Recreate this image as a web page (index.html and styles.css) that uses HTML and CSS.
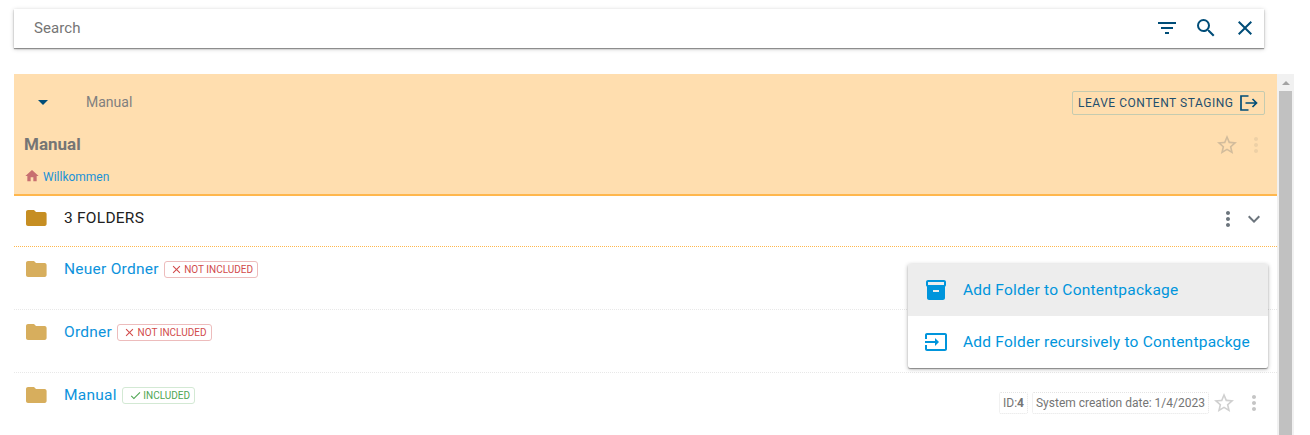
FILE: index.html
```html
<!DOCTYPE html>
<html lang="en">
<head>
<meta charset="utf-8">
<title>Manual</title>
<link rel="stylesheet" href="styles.css">
</head>
<body>
<svg class="defs" width="0" height="0">
  <symbol id="folder" viewBox="0 0 24 24"><path d="M10 4H4c-1.100 0-2 .9-2 2v12c0 1.100.9 2 2 2h16.600c1.100 0 2-.9 2-2V8c0-1.100-.9-2-2-2h-8.600l-2-2z"/></symbol>
  <symbol id="dots" viewBox="0 0 24 24"><path d="M12 8c1.100 0 2-.9 2-2s-.9-2-2-2-2 .9-2 2 .9 2 2 2zm0 2c-1.100 0-2 .9-2 2s.9 2 2 2 2-.9 2-2-.9-2-2-2zm0 6c-1.100 0-2 .9-2 2s.9 2 2 2 2-.9 2-2-.9-2-2-2z"/></symbol>
  <symbol id="star" viewBox="0 0 24 24"><path d="M22 9.240l-7.190-.62L12 2 9.190 8.630 2 9.240l5.460 4.730L5.820 21 12 17.270 18.180 21l-1.630-7.030L22 9.240zM12 15.400l-3.760 2.270 1-4.280-3.320-2.880 4.380-.38L12 6.100l1.710 4.040 4.380.38-3.320 2.880 1 4.280L12 15.400z"/></symbol>
  <symbol id="close" viewBox="0 0 24 24"><path d="M19 6.410L17.590 5 12 10.590 6.410 5 5 6.410 10.590 12 5 17.590 6.410 19 12 13.410 17.590 19 19 17.590 13.410 12z"/></symbol>
  <symbol id="check" viewBox="0 0 24 24"><path d="M9 16.170L4.830 12l-1.420 1.410L9 19 21 7l-1.410-1.410z"/></symbol>
</svg>

<div class="search">
  <span class="search-label">Search</span>
  <svg class="icon" viewBox="0 0 24 24"><path d="M10 18h4v-2h-4v2zM3 6v2h18V6H3zm3 7h12v-2H6v2z"/></svg>
  <svg class="icon" viewBox="0 0 24 24"><path d="M15.500 14h-.79l-.28-.27A6.471 6.471 0 0 0 16 9.500 6.500 6.500 0 1 0 9.500 16c1.610 0 3.090-.59 4.230-1.570l.27.28v.79l5 4.990L20.490 19l-4.990-5zm-6 0C7.010 14 5 11.990 5 9.500S7.010 5 9.500 5 14 7.010 14 9.500 11.990 14 9.500 14z"/></svg>
  <svg class="icon" viewBox="0 0 24 24"><use href="#close"/></svg>
</div>

<div class="frame">
  <main class="panel">
    <header class="head">
      <div class="toolbar">
        <svg class="icon caret" viewBox="0 0 24 24"><path d="M7 10l5 5 5-5z"/></svg>
        <span class="tab">Manual</span>
        <button class="leave">LEAVE CONTENT STAGING
          <svg class="leave-icon" viewBox="0 0 18 16"><path d="M8.500 1H1v14h7.500M5.500 8H16.500M12.500 4l4 4-4 4"/></svg>
        </button>
      </div>
      <div class="title-row">
        <h1 class="title">Manual</h1>
        <svg class="icon faint-star"><use href="#star"/></svg>
        <svg class="icon faint-dots"><use href="#dots"/></svg>
      </div>
      <div class="crumbs">
        <svg class="home" viewBox="0 0 24 24"><path d="M10 20v-6h4v6h5v-8h3L12 3 2 12h3v8z"/></svg>
        <a class="crumb">Willkommen</a>
      </div>
    </header>

    <div class="group">
      <svg class="icon group-folder"><use href="#folder"/></svg>
      <span class="group-name">3 FOLDERS</span>
      <svg class="icon grey"><use href="#dots"/></svg>
      <svg class="icon grey chevron" viewBox="0 0 24 24"><path d="M16.590 8.590L12 13.170 7.410 8.590 6 10l6 6 6-6z"/></svg>
    </div>

    <div class="row">
      <svg class="icon folder"><use href="#folder"/></svg>
      <a class="name">Neuer Ordner</a>
      <span class="badge no"><svg class="mark"><use href="#close"/></svg>NOT INCLUDED</span>
    </div>
    <div class="row">
      <svg class="icon folder"><use href="#folder"/></svg>
      <a class="name">Ordner</a>
      <span class="badge no wide"><svg class="mark"><use href="#close"/></svg>NOT INCLUDED</span>
    </div>
    <div class="row last">
      <svg class="icon folder"><use href="#folder"/></svg>
      <a class="name">Manual</a>
      <span class="badge yes"><svg class="mark"><use href="#check"/></svg>INCLUDED</span>
      <div class="meta">
        <span class="chip">ID:<b>4</b></span>
        <span class="chip date">System creation date: 1/4/2023</span>
        <svg class="icon meta-star"><use href="#star"/></svg>
        <svg class="icon meta-dots"><use href="#dots"/></svg>
      </div>
    </div>

    <div class="menu">
      <div class="item active">
        <svg class="icon" viewBox="0 0 24 24"><path d="M20 2H4c-1 0-2 .9-2 2v3.010c0 .72.43 1.340 1 1.690V20c0 1.100 1.100 2 2 2h14c.9 0 2-.9 2-2V8.700c.57-.35 1-.97 1-1.690V4c0-1.100-1-2-2-2zm-5 12H9v-2h6v2zm5-7H4V4h16v3z"/></svg>
        <span>Add Folder to Contentpackage</span>
      </div>
      <div class="item">
        <svg class="icon" viewBox="0 0 24 24"><path d="M21 3.010H3c-1.100 0-2 .9-2 2V9h2V4.990h18v14.030H3V15H1v4.010c0 1.100.9 1.980 2 1.980h18c1.100 0 2-.88 2-1.980v-14c0-1.110-.9-2-2-2zM11 16l4-4-4-4v3H1v2h10v3z"/></svg>
        <span>Add Folder recursively to Contentpackge</span>
      </div>
    </div>
  </main>
  <div class="scrollbar">
    <div class="arrow"></div>
    <div class="thumb"></div>
  </div>
</div>
</body>
</html>
```
FILE: styles.css
```css
* { box-sizing: border-box; }
body {
  margin: 0;
  padding: 9px 16px 0 14px;
  height: 435px;
  overflow: hidden;
  background: #fff;
  font-family: Roboto, sans-serif;
  color: #212121;
}
.defs { display: block; position: absolute; }
.icon { width: 24px; height: 24px; flex: none; fill: currentColor; display: block; }

.search {
  display: flex;
  align-items: center;
  gap: 15px;
  width: 1250px;
  height: 39px;
  padding: 0 7px 2px 20px;
  color: #004d78;
  box-shadow: 0 1px 4px rgba(0, 0, 0, .25), 0 1px 1px rgba(0, 0, 0, .35);
}
.search-label { flex: 1; font-size: 15px; color: #757575; letter-spacing: .1px; }

.frame { display: flex; margin-top: 26px; height: 361px; }
.panel { position: relative; width: 1263px; height: 361px; }
.head { height: 122px; padding: 16px 12px 0 10px; background: #ffdeaf; border-bottom: 2px solid #ffb74d; }

.toolbar { display: flex; align-items: center; height: 26px; padding-left: 7px; }
.caret { margin-bottom: 2px; color: #004d78; }
.tab { flex: 1; margin: 0 0 2px 31px; font-size: 14px; color: #808080; }
.leave {
  display: flex;
  align-items: center;
  justify-content: space-between;
  width: 193px;
  height: 24px;
  padding: 0 6px 0 5px;
  border: 1px solid #c5cbb0;
  border-radius: 2px;
  background: none;
  font: 12px Roboto, sans-serif;
  letter-spacing: .52px;
  white-space: nowrap;
  color: #1f4f6e;
}
.leave-icon { width: 18px; height: 16px; fill: none; stroke: #004d78; stroke-width: 1.7; }

.title-row { display: flex; align-items: center; height: 24px; margin-top: 17px; }
.title { flex: 1; margin: 0 0 2px; font-size: 17px; line-height: 24px; font-weight: 700; color: #757575; }
.faint-star { margin-right: 5px; color: #d2bc9c; }
.faint-dots { margin-right: -3px; color: #edd0a6; }
.crumbs { display: flex; align-items: center; height: 16px; margin-top: 12px; }
.home { width: 16px; height: 16px; margin-bottom: 2px; fill: #c86f70; }
.crumb { margin-left: 3px; font-size: 12px; color: #1a92d8; }

.group { display: flex; align-items: flex-start; height: 51px; padding: 10px 11px 0 10px; border-bottom: 1px dotted #ffb74d; }
.group-folder { color: #c68e22; }
.group-name { flex: 1; margin-left: 16px; font-size: 15.5px; line-height: 24px; letter-spacing: .25px; }
.grey { margin-top: 1px; color: #6c757d; }
.chevron { margin-left: 2px; }

.row { display: flex; align-items: flex-start; height: 63px; padding: 10px 11px 0 10px; border-bottom: 1px dotted #e8e8e8; }
.last { border-bottom: 0; }
.folder { color: #d7ae5d; }
.name { margin-left: 16px; font-size: 15.5px; line-height: 24px; letter-spacing: .25px; color: #0d93dc; }
.badge {
  display: flex;
  align-items: center;
  height: 17px;
  margin: 4px 0 0 5px;
  padding: 0 4px 0 5px;
  border: 1px solid;
  border-radius: 3px;
  font-size: 10px;
  line-height: 15px;
  white-space: nowrap;
}
.mark { width: 13px; height: 13px; flex: none; margin-right: 1.5px; fill: currentColor; }
.no { width: 94px; color: #d14b4b; border-color: #edbcbc; }
.wide { width: 95px; }
.yes { width: 73px; padding-left: 6px; color: #4fa653; border-color: #d3e9d4; }

.meta { display: flex; align-items: center; height: 24px; margin: 8px 0 0 auto; font-size: 12px; color: #757575; }
.chip { height: 22px; padding: 0 3px; border: 1px dotted #e4e4e4; border-radius: 2px; line-height: 20px; white-space: nowrap; }
.date { margin-left: 4px; }
.meta-star { margin-left: 3px; color: #d0d0d0; }
.meta-dots { margin-left: 6px; color: #c5c5c5; }

.menu {
  position: absolute;
  top: 190px;
  left: 894px;
  width: 360px;
  height: 104px;
  background: #fff;
  border-radius: 2px;
  box-shadow: 0 1px 4px rgba(0, 0, 0, .3), 0 1px 1px rgba(0, 0, 0, .35);
}
.item { display: flex; align-items: center; height: 52px; padding-left: 16px; gap: 15px; font-size: 15.5px; letter-spacing: .23px; white-space: nowrap; color: #0095dc; }
.active { background: #ededed; border-radius: 2px 2px 0 0; }

.scrollbar { width: 17px; height: 361px; padding: 7px 2px 0; background: #f1f1f1; }
.arrow { width: 0; margin: 0 auto; border: 4px solid transparent; border-top: 0; border-bottom: 4px solid #a3a3a3; }
.thumb { height: 344px; margin-top: 6px; background: #c1c1c1; }
```
